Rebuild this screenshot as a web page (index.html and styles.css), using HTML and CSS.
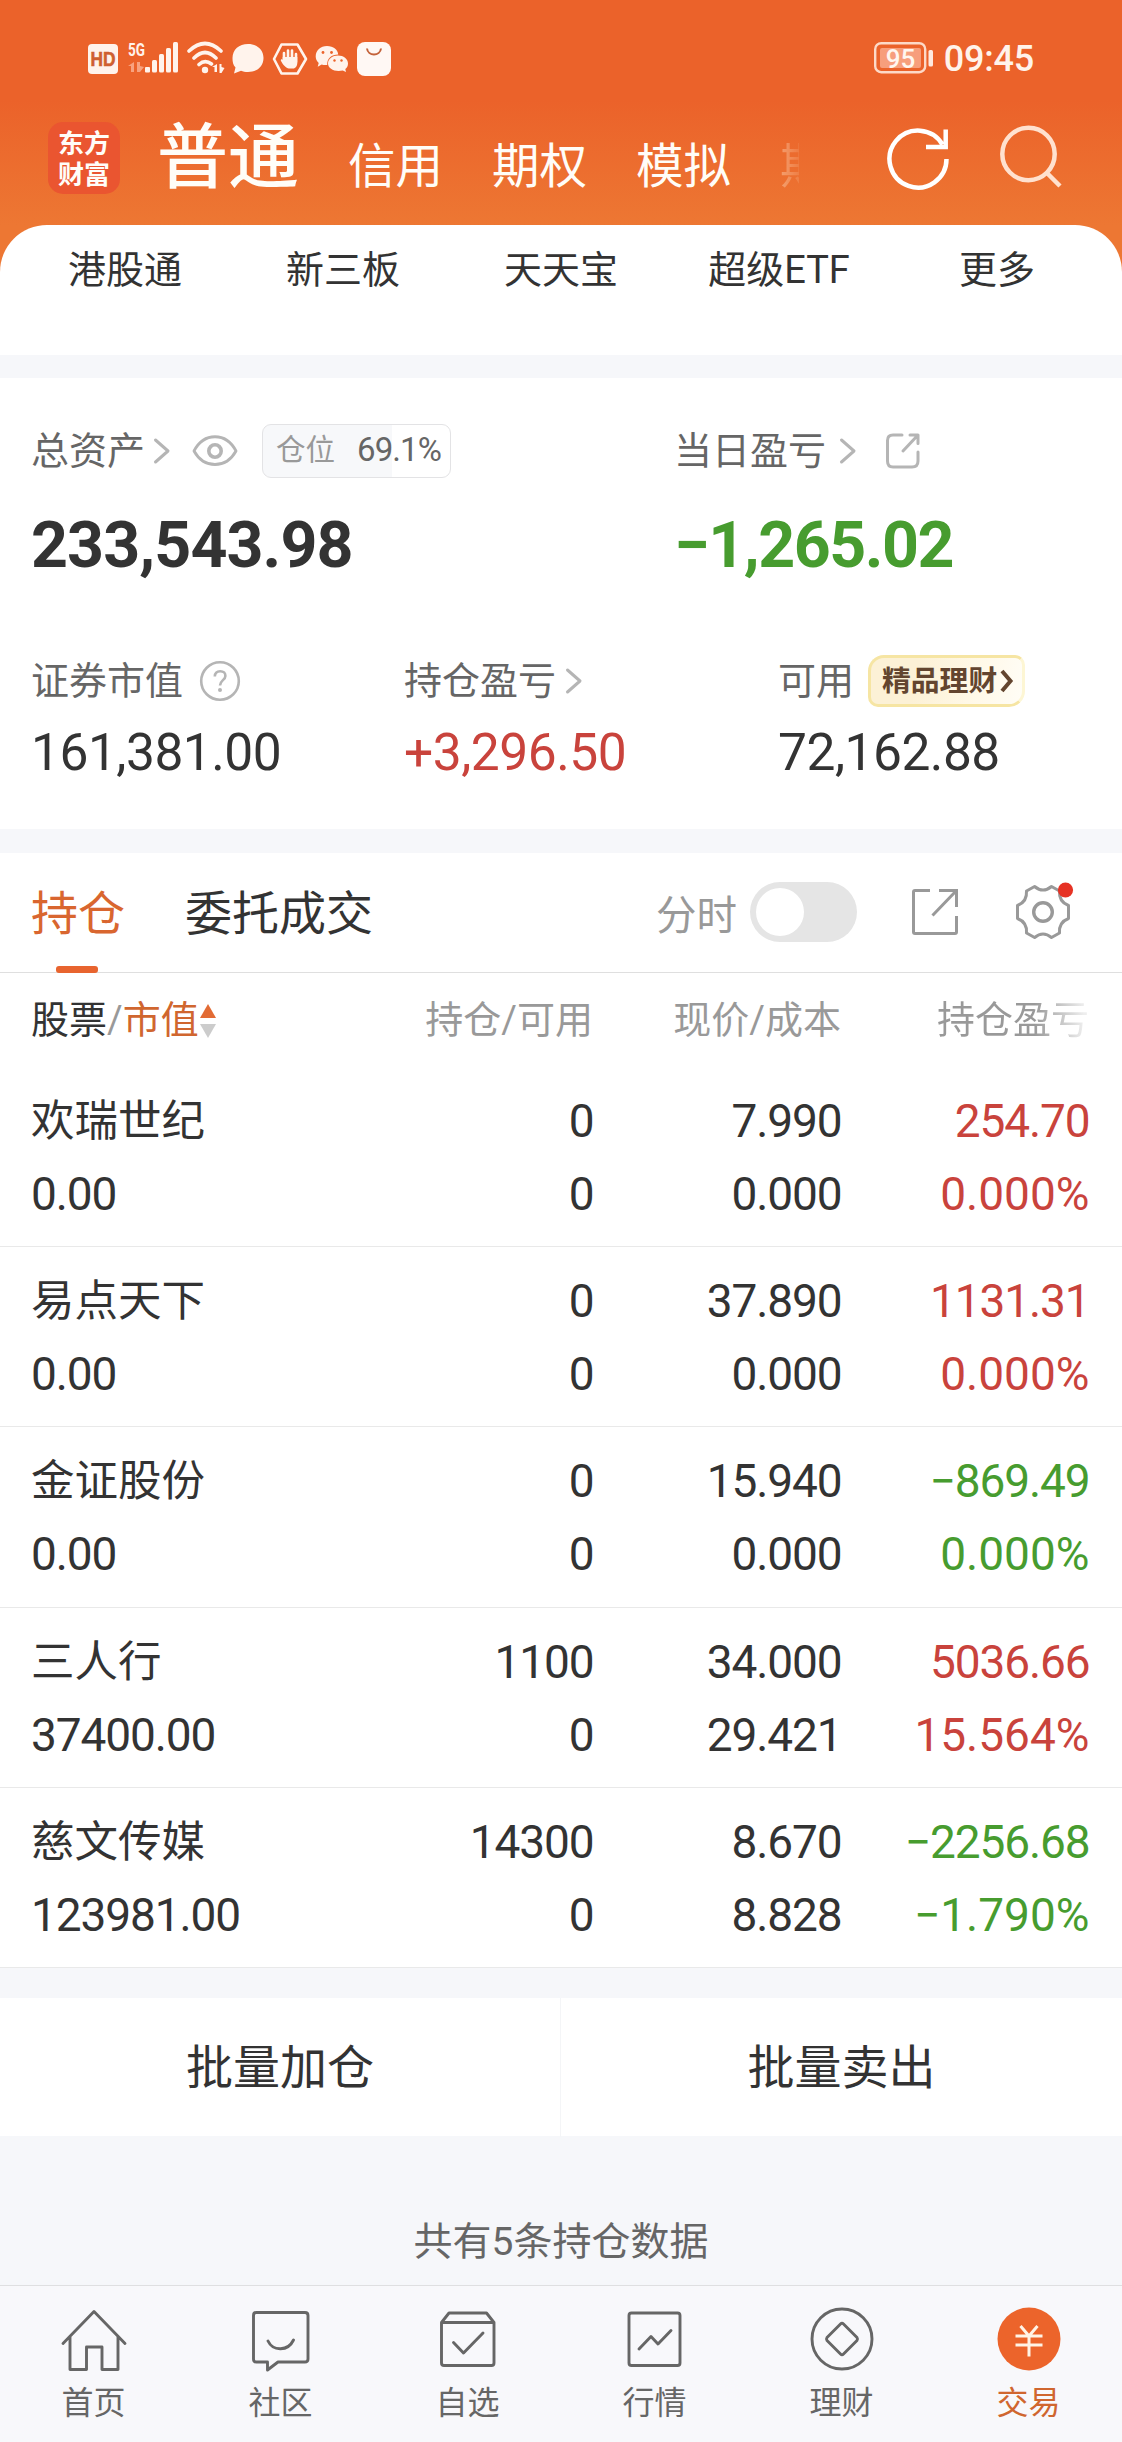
FILE: index.html
```html
<!DOCTYPE html>
<html lang="zh-CN">
<head>
<meta charset="utf-8">
<title>交易</title>
<link rel="stylesheet" href="styles.css">
</head>
<body>
<header class="top">
  <div class="status">
    <svg class="status-left" width="310" height="40" viewBox="84 38 310 40">
      <rect x="88" y="44" width="30" height="30" rx="4" fill="#fff3ec"/>
      <text x="103" y="66" class="hd" text-anchor="middle" textLength="25" lengthAdjust="spacingAndGlyphs">HD</text>
      <text x="128" y="56" class="fiveg" textLength="17" lengthAdjust="spacingAndGlyphs">5G</text>
      <g fill="#f8a27f"><path d="M134 62v10h-3v-6h-3zM137 62h3v4l4 1-4 5h-3z"/></g>
      <g fill="#fff3ec"><rect x="145" y="67" width="5" height="5.500" rx="1"/><rect x="152" y="60" width="5" height="12.500" rx="1.500"/><rect x="159" y="54" width="5" height="18.500" rx="1.500"/><rect x="166" y="48" width="5" height="24.500" rx="1.500"/><rect x="173" y="42" width="5" height="30.500" rx="1.500"/></g>
      <g fill="none" stroke="#fff3ec" stroke-width="3.600" stroke-linecap="round"><path d="M189 51Q205 36 221 51M194 58Q205 47 216 58M199 64.500Q205 59 211.500 64"/></g>
      <circle cx="205" cy="70" r="3.200" fill="#fff3ec"/>
      <path d="M217 64v8h-2.500v-5H212zM219.500 64h2v3l3 1-3 5h-2z" fill="#fff3ec"/>
      <path d="M248 44c9 0 15.500 5.500 15.500 14S257 72 248 72c-3 0-5-.5-7-1.300L234 73.500l1.500-6C233 65 232.500 62 232.500 58 232.500 49.500 239 44 248 44z" fill="#fff3ec"/>
      <path d="M281.500 44.500h16L306 59l-8.500 14.500h-16L274 59z" fill="none" stroke="#fff3ec" stroke-width="2.600" stroke-linejoin="round"/>
      <path d="M284 60v-7M288 60v-9.500M292 60v-9.500M296 62v-8" stroke="#fff3ec" stroke-width="2.600" stroke-linecap="round"/>
      <path d="M282.700 57h14.600v6c0 3-2 5.500-4 5.500h-4.500c-2.500 0-6-4-7.800-7.500-.8-1.500 1-2.300 1.700-1z" fill="#fff3ec"/>
      <path d="M327 46c6.500 0 11 4 11.200 8.500-6.500 0-11.500 4-11 10.500-2 .3-4 0-5.500-.5l-4 2.200 1-3.700c-2-1.800-3-4-3-6.500C315.700 50.500 320.500 46 327 46z" fill="#fff3ec"/>
      <path d="M338 55.500c5.500 0 10 3.500 10 8 0 2.300-1 4.200-2.700 5.600l.7 3-3.200-1.600c-8 1.800-14.800-1.700-14.800-7 0-4.500 4.500-8 10-8z" fill="#fff3ec"/>
      <g fill="#ec642b"><circle cx="323" cy="52.500" r="1.400"/><circle cx="331.500" cy="52.500" r="1.400"/><circle cx="334.500" cy="60.500" r="1.200"/><circle cx="341.500" cy="60.500" r="1.200"/></g>
      <rect x="357" y="42" width="34" height="34" rx="8" fill="#fff8f4"/>
      <path d="M367 48.500c1 8 13 8 14 0" fill="none" stroke="#c4623a" stroke-width="2"/>
    </svg>
    <div class="status-right">
      <svg width="60" height="34" viewBox="0 0 60 34">
        <rect x="1.200" y="2.200" width="50" height="29" rx="6" fill="none" stroke="#fdd9c7" stroke-width="2.400"/>
        <rect x="6" y="7" width="41" height="20" rx="2" fill="#f79e7c"/>
        <rect x="54.500" y="9" width="4.500" height="16.500" rx="1.500" fill="#ffe9df"/>
        <text x="26.500" y="26.500" text-anchor="middle" class="batt">95</text>
      </svg>
      <span class="clock">09:45</span>
    </div>
  </div>
  <nav class="accounts">
    <div class="logo"><span>东方</span><span>财富</span></div>
    <div class="acct-list"><b class="acct-main">普通</b><span>信用</span><span>期权</span><span>模拟</span><span class="acct-cut">期</span></div>
    <svg class="refresh" width="66" height="66" viewBox="0 0 66 66" fill="none" stroke="#fff" stroke-width="4.500"><path d="M60.500 34A28.500 28.500 0 1 1 56.500 19.500M59.700 4.500V22H40"/></svg>
    <svg class="search" width="66" height="66" viewBox="0 0 66 66" fill="none" stroke="#ffe1cf" stroke-width="4.500"><circle cx="29.500" cy="29" r="26.200"/><path d="M48 48L61 61"/></svg>
  </nav>
</header>
<main>
  <section class="links"><span>港股通</span><span>新三板</span><span>天天宝</span><span>超级ETF</span><span>更多</span></section>

  <section class="assets">
    <div class="pair">
      <div class="total">
        <div class="label">总资产
          <svg class="chev c1" width="18" height="28" viewBox="0 0 18 28"><path d="M2.500 3L15 14 2.500 25"/></svg>
          <svg class="eye" width="48" height="34" viewBox="0 0 48 34" fill="none" stroke="#b5b5b5" stroke-width="2.800"><path d="M3 17C13-2 35-2 45 17 35 35 13 35 3 17z" stroke-linejoin="round"/><circle cx="24" cy="17" r="6.200" stroke-width="3.600"/></svg>
          <div class="ratio"><span>仓位</span><em>69.1%</em></div>
        </div>
        <div class="big">233,543.98</div>
      </div>
      <div class="today">
        <div class="label">当日盈亏
          <svg class="chev c2" width="18" height="28" viewBox="0 0 18 28"><path d="M2.500 3L15 14 2.500 25"/></svg>
          <svg class="share" width="36" height="38" viewBox="0 0 36 38" fill="none" stroke="#b5b5b5" stroke-width="3" stroke-linecap="round" stroke-linejoin="round"><path d="M17 3H8Q2.500 3 2.500 8.500V29Q2.500 35 8 35H27Q33 35 33 29V20M25 3H33V11.500M33 3L18 19"/></svg>
        </div>
        <div class="big down">−1,265.02</div>
      </div>
    </div>
    <div class="trio">
      <div class="cell"><div class="label">证券市值<svg class="help" width="42" height="42" viewBox="0 0 42 42"><circle cx="21" cy="21" r="18.800" fill="none" stroke="#b5b5b5" stroke-width="2.600"/><path d="M15.800 16.500Q16 11.200 21.200 11.200T26.400 16C26.400 20 21 20.500 21 25.500" fill="none" stroke="#b5b5b5" stroke-width="2.600"/><circle cx="21" cy="30" r="2" fill="#b5b5b5"/></svg></div><div class="mid">161,381.00</div></div>
      <div class="cell"><div class="label">持仓盈亏<svg class="chev c3" width="18" height="28" viewBox="0 0 18 28"><path d="M2.500 3L15 14 2.500 25"/></svg></div><div class="mid up">+3,296.50</div></div>
      <div class="cell"><div class="label">可用<span class="promo">精品理财<svg width="14" height="24" viewBox="0 0 14 24" fill="none" stroke="#63452f" stroke-width="4"><path d="M2 2L10.500 12 2 22"/></svg></span></div><div class="mid">72,162.88</div></div>
    </div>
  </section>

  <section class="holdings">
    <div class="tabs">
      <span class="tab on">持仓</span><span class="tab">委托成交</span>
      <span class="mode">分时</span><i class="switch"></i>
      <svg class="out" width="48" height="48" viewBox="0 0 48 48" fill="none" stroke="#999" stroke-width="3"><path d="M19 2.500H4Q2.500 2.500 2.500 4V44Q2.500 45.500 4 45.500H44Q45.500 45.500 45.500 44V28M28 2.500H45.500V19M45.500 2.500L21.500 27.500"/></svg>
      <svg class="gear" width="66" height="66" viewBox="0 0 66 66"><g fill="none" stroke="#999" stroke-width="3"><path d="M24.600 7.500C30 12 36 12 41.500 7.500L49.500 12C49 18.500 52 24 58.500 26.500V39.500C52 42 49 47.500 49.500 54L41.500 58.500C36 54 30 54 24.600 58.500L16.500 54C17 47.500 14 42 7.500 39.500V26.500C14 24 17 18.500 16.500 12Z" stroke-linejoin="round"/><circle cx="33" cy="33" r="9.300" stroke-width="3.400"/></g><circle cx="55.500" cy="11" r="7.600" fill="#e63224"/></svg>
    </div>
    <div class="grid head">
      <span class="first"><b>股票</b>/<em>市值</em><svg width="17" height="36" viewBox="0 0 17 36"><path d="M8 1L16 15H0z" fill="#e26b34"/><path d="M0 21H16L8 35z" fill="#ccc"/></svg></span><span>持仓/可用</span><span>现价/成本</span><span class="fade">持仓盈亏</span>
    </div>
    <div class="grid row"><span>欢瑞世纪</span><span>0</span><span>7.990</span><span class="up">254.70</span><span>0.00</span><span>0</span><span>0.000</span><span class="up">0.000%</span></div>
    <div class="grid row"><span>易点天下</span><span>0</span><span>37.890</span><span class="up">1131.31</span><span>0.00</span><span>0</span><span>0.000</span><span class="up">0.000%</span></div>
    <div class="grid row"><span>金证股份</span><span>0</span><span>15.940</span><span class="down">−869.49</span><span>0.00</span><span>0</span><span>0.000</span><span class="down">0.000%</span></div>
    <div class="grid row"><span>三人行</span><span>1100</span><span>34.000</span><span class="up">5036.66</span><span>37400.00</span><span>0</span><span>29.421</span><span class="up">15.564%</span></div>
    <div class="grid row"><span>慈文传媒</span><span>14300</span><span>8.670</span><span class="down">−2256.68</span><span>123981.00</span><span>0</span><span>8.828</span><span class="down">−1.790%</span></div>
  </section>

  <section class="batch"><span>批量加仓</span><span>批量卖出</span></section>
  <p class="count">共有5条持仓数据</p>
</main>
<nav class="bar">
  <a><svg width="72" height="72" viewBox="0 0 72 72"><path d="M5 39.500L36 7.500 67 39.500M12 33V65.500H28.500V43H44V65.500H60V33"/></svg>首页</a>
  <a><svg width="72" height="72" viewBox="0 0 72 72"><path d="M11 8.500H60Q63 8.500 63 11.500V55Q63 58 60 58H33L22.500 66V58H11Q8.500 58 8.500 55V11.500Q8.500 8.500 11 8.500zM23 37C28 47.500 43 47.500 48.500 36"/></svg>社区</a>
  <a><svg width="72" height="72" viewBox="0 0 72 72"><path d="M9.500 18.500L17 9H54.500L62 18.500V59Q62 61.500 59.500 61.500H12Q9.500 61.500 9.500 59zM9.500 18.500H62M21.500 38.500L31.500 49 51 29"/></svg>自选</a>
  <a><svg width="72" height="72" viewBox="0 0 72 72"><rect x="10" y="9" width="51" height="52.500" rx="2.500"/><path d="M20 45L32 32.500 39 40 52 26.500"/></svg>行情</a>
  <a><svg width="72" height="72" viewBox="0 0 72 72"><circle cx="36" cy="35" r="30"/><path d="M34.500 20Q36 18.500 37.500 20L51 33.500Q52 35 51 36.500L37.500 50Q36 51.500 34.500 50L21 36.500Q20 35 21 33.500z"/></svg>理财</a>
  <a class="on"><svg width="72" height="72" viewBox="0 0 72 72"><circle class="disc" cx="36" cy="35" r="31.500"/><path class="yen" d="M27.500 22L36 32 44.500 22M36 31V52.500M22.500 32H49.500M22.500 41H49.500"/></svg>交易</a>
</nav>
</body>
</html>
```

FILE: styles.css
```css
* { box-sizing: border-box; }
body {
  margin: 0;
  width: 1122px;
  height: 2442px;
  display: flex;
  flex-direction: column;
  background: #f6f7fa;
  color: #333;
  font-family: Roboto, "Noto Sans CJK SC", sans-serif;
}
b, em, i { font-weight: 400; font-style: normal; }
svg { display: block; flex: none; }
.up { color: #c9433c; }
.down { color: #479c2f; }

/* header */
.top {
  height: 285px;
  background: linear-gradient(#eb622a 0, #eb622a 100px, #ed7733 225px);
  color: #fffdf8;
}
.status {
  height: 112px;
  padding: 38px 88px 0 84px;
  display: flex;
  justify-content: space-between;
}
.hd { font: 700 20px "Liberation Sans", sans-serif; fill: #cf5f31; stroke: #cf5f31; stroke-width: .6; }
.fiveg { font: 700 18px Roboto, sans-serif; fill: #fff3ec; }
.batt { font: 500 26px Roboto, sans-serif; fill: #fff6ef; }
.status-right { display: flex; gap: 10px; padding-top: 3px; }
.clock { font-size: 36px; line-height: 37px; font-weight: 500; color: #fff3ea; letter-spacing: -.2px; }
.accounts { display: flex; padding-left: 48px; height: 113px; }
.logo {
  width: 72px;
  height: 72px;
  margin-top: 10px;
  border-radius: 15px;
  background: #ea5530;
  display: flex;
  flex-direction: column;
  align-items: center;
  padding-top: 4px;
  font: 700 26px/31px "Noto Sans CJK SC", sans-serif;
}
.acct-list {
  width: 680px;
  flex: none;
  margin: 6px 0 0 37px;
  display: flex;
  align-items: baseline;
  gap: 49px;
  font-size: 47.5px;
  line-height: 80px;
  white-space: nowrap;
}
.acct-list span { position: relative; top: 1px; }
.acct-main { font-size: 71px; font-weight: 500; }
.acct-cut {
  color: transparent;
  background: linear-gradient(90deg, rgba(255,220,190,.45), rgba(255,220,190,.15) 19px, transparent 19px);
  -webkit-background-clip: text;
  background-clip: text;
}
.refresh { margin: 13px 0 0 49px; }
.search { margin: 13px 0 0 47px; }

/* quick links */
main { margin-top: -60px; flex: 1; }
.links {
  height: 130px;
  background: #fff;
  border-radius: 47px 47px 0 0;
  padding: 19px 16px 0;
  display: grid;
  grid-template-columns: repeat(5, 1fr);
  text-align: center;
  font-size: 38px;
  line-height: 52px;
}

/* assets */
.assets { height: 451px; margin-top: 23px; background: #fff; padding: 46px 0 0 31px; }
.pair { display: grid; grid-template-columns: 643px 1fr; height: 230px; }
.label { display: flex; align-items: center; height: 54px; font-size: 38px; color: #666; white-space: nowrap; line-height: 55px; }
.chev { fill: none; stroke: #b5b5b5; stroke-width: 3; stroke-linecap: round; stroke-linejoin: round; }
.c1 { margin-left: 8px; }
.c2 { margin-left: 13px; }
.c3 { margin-left: 9px; }
.eye { margin-left: 20px; }
.ratio {
  margin-left: 23px;
  width: 189px;
  height: 54px;
  border: 1.5px solid #e3e3e5;
  border-radius: 9px;
  background: linear-gradient(90deg, #f7f8fa 69.1%, #fff 69.1%);
  display: flex;
  justify-content: space-between;
  padding: 0 9px 0 13px;
  font-size: 29.5px;
  line-height: 50px;
  color: #999;
}
.ratio em { color: #666; font-size: 33px; letter-spacing: -.9px; }
.share { margin-left: 28px; }
.big { font-size: 64.5px; font-weight: 700; line-height: 80px; margin-top: 27px; letter-spacing: -.9px; white-space: nowrap; }
.big.down { letter-spacing: -1.5px; }
.trio { display: grid; grid-template-columns: 373px 374px 1fr; }
.help { margin-left: 16px; }
.mid { font-size: 51.5px; line-height: 60px; margin-top: 15px; letter-spacing: -.5px; }
.promo {
  display: flex;
  align-items: center;
  gap: 3px;
  margin-left: 14px;
  width: 157px;
  height: 52px;
  padding-left: 11px;
  border: 3px solid #f6e5a3;
  border-right-color: #fdf6d4;
  border-radius: 16px 10px 16px 10px;
  background: linear-gradient(100deg, #fcf1d6 30%, #fff8e6 65%, #fffdf6);
  color: #63452f;
  font-size: 28.8px;
  font-weight: 700;
  line-height: 45px;
}

/* holdings */
.holdings { margin-top: 24px; background: #fff; height: 1115px; }
.tabs { height: 120px; border-bottom: 1.5px solid #dfdfdf; padding-left: 31px; display: flex; align-items: center; }
.tab { font-size: 47px; line-height: 119px; height: 118px; margin-right: 60px; position: relative; }
.tab.on { color: #d9662f; }
.tab.on::after { content: ""; position: absolute; left: 25px; bottom: -1px; width: 42px; height: 7px; border-radius: 3px; background: #e8642f; }
.mode { font-size: 40.5px; color: #999; margin-left: 223px; }
.switch { width: 107px; height: 60px; border-radius: 30px; background: #e5e5e5; margin: -2px 0 0 13px; padding: 6px; }
.switch::before { content: ""; display: block; width: 48px; height: 48px; border-radius: 50%; background: #fff; }
.out { margin: -1px 0 0 54px; }
.gear { margin: -2px 0 0 51px; }
.grid {
  display: grid;
  grid-template-columns: 260px 302px 248px 248px;
  padding-left: 31px;
  text-align: right;
  white-space: nowrap;
}
.grid span:nth-child(4n+1) { text-align: left; }
.head { height: 94px; line-height: 95px; font-size: 38px; color: #999; }
.head .first { display: flex; align-items: center; }
.head b { color: #333; }
.head em { color: #d0662f; }
.head svg { margin-left: 1px; }
.head .fade { color: transparent; background: linear-gradient(90deg, #999 78%, #eee 98%); -webkit-background-clip: text; background-clip: text; }
.row { height: 180.2px; padding-top: 18px; grid-template-columns: 260px 302.5px 248px 248px; grid-auto-rows: 73px; line-height: 73px; font-size: 46px; letter-spacing: -1.1px; border-bottom: 1.5px solid #e9e9e9; }
.row span:first-child { font-size: 43.5px; letter-spacing: 0; line-height: 74px; }
.row span:nth-child(8) { letter-spacing: 0; }

/* footer actions */
.batch { margin-top: 30px; height: 138px; background: #fff; display: grid; grid-template-columns: 560px 1fr; text-align: center; font-size: 47px; line-height: 139px; }
.batch span + span { border-left: 1.5px solid #f4f5f7; }
.count { margin: 78px 0 0; text-align: center; font-size: 39px; line-height: 56px; color: #666; }

/* tab bar */
.bar { height: 157px; border-top: 1.5px solid #dfdfe1; background: #f8f8fb; display: grid; grid-template-columns: repeat(6, 187px); }
.bar a { display: flex; flex-direction: column; align-items: center; padding-top: 18px; font-size: 32px; line-height: 54px; color: #666; }
.bar svg { fill: none; stroke: #666; stroke-width: 2.9; stroke-linecap: round; stroke-linejoin: round; }
.bar .on { color: #d0662f; }
.bar .disc { fill: #ec642b; stroke: none; }
.bar .yen { stroke: #fff3e6; stroke-linecap: butt; stroke-width: 3; }
```
